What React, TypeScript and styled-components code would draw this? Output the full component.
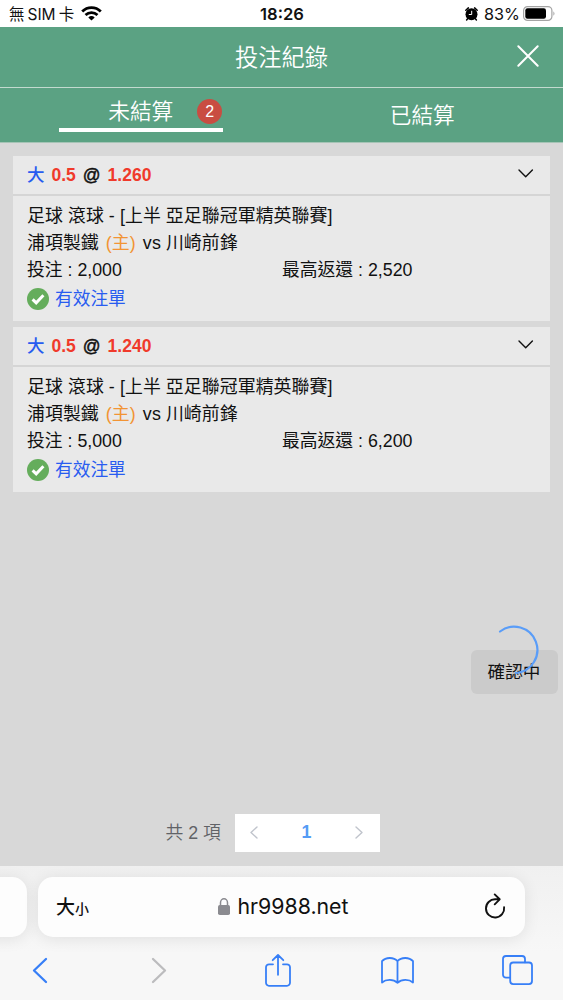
import React from 'react';
import styled, { createGlobalStyle } from 'styled-components';

const sans = '"Liberation Sans", "Noto Sans CJK TC", sans-serif';
const system = 'Inter, "Noto Sans CJK TC", sans-serif';

const GlobalStyle = createGlobalStyle`
  * { box-sizing: border-box; }
  body { margin: 0; background: #d8d8d8; font-family: ${sans}; color: #111; }
  svg { display: block; flex: none; overflow: visible; }
`;

const Screen = styled.div`
  width: 563px;
  height: 1000px;
  display: flex;
  flex-direction: column;
  background: #d8d8d8;
  overflow: hidden;
`;

const StatusBar = styled.div`
  flex: none;
  height: 27px;
  display: grid;
  grid-template-columns: 1fr auto 1fr;
  align-items: center;
  padding: 1px 8px 0 9px;
  background: #fff;
  font-family: ${system};
  font-size: 15.5px;
  line-height: 25px;
  white-space: nowrap;
`;

const Carrier = styled.div`
  display: flex;
  align-items: center;
  gap: 3px;
  svg { margin: -1px 0 0 4px; }
`;

const Clock = styled.div`
  font-weight: 600;
  font-size: 16.6px;
`;

const Power = styled.div`
  display: flex;
  align-items: center;
  justify-content: flex-end;
  gap: 6px;
  svg { margin-top: -1px; }
`;

const Percent = styled.span`
  font-size: 16.2px;
  margin-right: -3px;
`;

const TitleBar = styled.header`
  flex: none;
  height: 61px;
  display: grid;
  grid-template-columns: 70px 1fr 70px;
  align-items: center;
  justify-items: center;
  background: #5ba283;
  border-bottom: 1px solid #c3dacf;
  color: #fff;
  svg { margin: -2px 1px 0 0; }
`;

const Title = styled.h1`
  grid-column: 2;
  margin: 0;
  padding-top: 2px;
  font-size: 23.3px;
  font-weight: 350;
  line-height: 58px;
`;

const TabBar = styled.nav`
  flex: none;
  height: 55px;
  display: grid;
  grid-template-columns: 1fr 1fr;
  justify-items: center;
  background: #5ba283;
  border-bottom: 1px solid #a6c4b6;
`;

const Tab = styled.div<{ $active?: boolean }>`
  position: relative;
  width: 164px;
  height: ${p => (p.$active ? 44 : 54)}px;
  line-height: ${p => (p.$active ? 48 : 56)}px;
  border-bottom: ${p => (p.$active ? '4px solid #fff' : 'none')};
  text-align: center;
  color: #fff;
  font-size: 21.7px;
  font-weight: 350;
`;

const Badge = styled.span`
  position: absolute;
  right: 0.5px;
  top: 11px;
  width: 25px;
  height: 25px;
  border-radius: 50%;
  background: #c94d42;
  font-size: 16px;
  line-height: 25px;
`;

const Content = styled.main`
  flex: 1;
  min-height: 0;
  display: flex;
  flex-direction: column;
  padding: 13px 13.5px 14px 13px;
`;

const Card = styled.article`
  flex: none;
  height: 165px;
  margin-bottom: 6px;
  background: #e9e9e9;
  font-size: 17.9px;
  line-height: 27px;
  white-space: nowrap;
`;

const CardHead = styled.div`
  height: 40px;
  display: flex;
  align-items: center;
  justify-content: space-between;
  padding: 0 16px 1px 14px;
  border-bottom: 2px solid #d5d5d5;
  svg { margin-top: -2px; }
`;

const Odds = styled.div`
  display: flex;
  gap: 7px;
  padding-top: 1px;
  font-size: 17.5px;
  font-weight: 700;
  color: #f03a2b;
`;

const Side = styled.span`
  color: #285cf0;
  font-weight: 500;
`;

const At = styled.span`
  color: #111;
  font-weight: 400;
  -webkit-text-stroke: 0.5px #111;
`;

const CardBody = styled.div`
  padding: 7px 14px 0;
`;

const Line = styled.div`
  height: 27px;
  letter-spacing: 0.06px;
`;

const Host = styled.span`
  margin: 0 2px 0 2px;
  color: #f29434;
`;

const Amounts = styled.div`
  height: 27px;
  display: grid;
  grid-template-columns: 255px 1fr;
  font-size: 17.8px;
`;

const Valid = styled.div`
  height: 29px;
  display: flex;
  align-items: center;
  gap: 6px;
  color: #285cf0;
  font-size: 17.7px;
  span { padding-top: 2px; }
`;

const Pending = styled.div`
  position: relative;
  flex: none;
  align-self: flex-end;
  width: 87px;
  height: 43.5px;
  margin: 152px -8px 0 0;
  border-radius: 6px;
  background: #cbcbcb;
  text-align: center;
  font-size: 17.6px;
  line-height: 44px;
`;

const Spinner = styled.svg`
  position: absolute;
  left: 18.5px;
  top: -25px;
`;

const Pagination = styled.div`
  display: flex;
  align-items: center;
  gap: 14px;
  margin: auto 0 0 152.5px;
  color: #606266;
  font-size: 17.8px;
  font-weight: 350;
`;

const Total = styled.span`
  margin-top: -4px;
`;

const Pager = styled.div`
  width: 145px;
  height: 38px;
  display: flex;
  align-items: center;
  justify-content: space-between;
  padding: 0 17px 1px 15px;
  background: #fff;
  color: #559cf5;
  font-weight: 700;
`;

const Browser = styled.footer`
  flex: none;
  height: 134px;
  display: flex;
  flex-direction: column;
  background: linear-gradient(#f0f0f0, #f7f7f7 65%);
  font-family: ${system};
`;

const AddressRow = styled.div`
  display: flex;
  gap: 11px;
  margin: 10.5px 0 0 -20px;
`;

const Surface = styled.div`
  height: 60px;
  border-radius: 15px;
  background: #fdfdfd;
  box-shadow: 0 2px 16px rgba(0, 0, 0, 0.09);
`;

const PreviousTab = styled(Surface)`
  width: 47px;
`;

const Address = styled(Surface)`
  width: 487px;
  display: grid;
  grid-template-columns: 56px 1fr 56px;
  align-items: center;
  padding: 0 19px 0 18px;
`;

const TextSize = styled.div`
  display: flex;
  align-items: baseline;
  margin-top: -2px;
  font-size: 19px;
  font-weight: 500;
  small { font-size: 14px; }
`;

const Domain = styled.div`
  display: flex;
  align-items: center;
  justify-content: center;
  gap: 8px;
  padding-left: 4px;
  font-size: 21.3px;
  span { margin-top: -2px; }
`;

const Reload = styled.div`
  justify-self: end;
  margin-top: -3px;
`;

const Toolbar = styled.div`
  display: grid;
  grid-template-columns: repeat(5, 119.4px);
  align-items: center;
  justify-items: center;
  height: 40px;
  margin: 13.5px 0 0 -20px;
`;

const stroke = { fill: 'none', strokeLinecap: 'round', strokeLinejoin: 'round' } as const;
const blue = '#377ff7';

const Wifi = () => (
  <svg width="21" height="15" viewBox="0 0 21 15" fill="none" stroke="#000" strokeWidth="2.8">
    <path d="M1.2 5.5C6.5.3 14.5.3 19.8 5.5M4.5 9C8 5.7 13 5.7 16.5 9" />
    <path d="M10.5 14.6L7.3 11.5Q10.5 8.7 13.7 11.5Z" fill="#000" stroke="none" />
  </svg>
);

const Alarm = () => (
  <svg width="13" height="14" viewBox="0 0 13 14">
    <circle cx="6.5" cy="7.2" r="6" />
    <path d="M.8 3.2L3.4.9M12.2 3.2L9.6.9M2.6 11.7l-1 1.2M10.4 11.7l1 1.2" {...stroke} stroke="#000" strokeWidth="1.5" />
    <path d="M6.7 4.2v3.3H4.2" {...stroke} stroke="#fff" strokeWidth="1" />
  </svg>
);

const Battery = () => (
  <svg width="32" height="15" viewBox="0 0 32 15">
    <rect x=".6" y=".6" width="28.3" height="13.8" rx="4" fill="#fff" stroke="#a4a4a4" strokeWidth="1.2" />
    <rect x="2.3" y="2.2" width="20.7" height="10.6" rx="2.2" />
    <path d="M30.4 5.2q2.2 2.3 0 4.6z" fill="#a4a4a4" />
  </svg>
);

const Close = () => (
  <svg width="22" height="22" viewBox="0 0 22 22" {...stroke} stroke="#fff" strokeWidth="2">
    <path d="M1.3 1.3l19.4 19.4M20.7 1.3L1.3 20.7" />
  </svg>
);

const ChevronDown = () => (
  <svg width="16" height="9" viewBox="0 0 16 9" {...stroke} stroke="#111" strokeWidth="1.4">
    <path d="M1 1L7.7 7.7 14.4 1" />
  </svg>
);

const Check = () => (
  <svg width="22" height="22" viewBox="0 0 22 22">
    <circle cx="11" cy="11" r="11" fill="#65ad5c" />
    <path d="M5.6 11.3l3.6 3.5 7.2-7.5" fill="none" stroke="#fff" strokeWidth="3" />
  </svg>
);

const Arrow = ({ flip = false, w = 14, h = 25, color, thick }: { flip?: boolean; w?: number; h?: number; color: string; thick: number }) => (
  <svg width={w} height={h} viewBox={`0 0 ${w} ${h}`} {...stroke} stroke={color} strokeWidth={thick}>
    <path d={flip ? `M1 1L${w - 1} ${h / 2} 1 ${h - 1}` : `M${w - 1} 1L1 ${h / 2} ${w - 1} ${h - 1}`} />
  </svg>
);

const Lock = () => (
  <svg width="12" height="17" viewBox="0 0 12 17">
    <rect y="7" width="12" height="10" rx="1.8" fill="#8b8b90" />
    <path d="M2.5 8V4.7a3.5 3.9 0 0 1 7 0V8" fill="none" stroke="#8b8b90" strokeWidth="1.5" />
  </svg>
);

const ReloadIcon = () => (
  <svg width="22" height="25" viewBox="0 0 22 25" {...stroke} stroke="#111" strokeWidth="1.9">
    <path d="M15.6 6.3H11.3A9.1 9.1 0 1 0 20.1 14.3M10.7 1.4l5 4.9-5 5" />
  </svg>
);

const Share = () => (
  <svg width="26" height="33" viewBox="0 0 26 33" {...stroke} stroke={blue} strokeWidth="1.8">
    <path d="M8 10.3H4a3 3 0 0 0-3 3v15.5a3 3 0 0 0 3 3h18a3 3 0 0 0 3-3V13.3a3 3 0 0 0-3-3h-4M13 20.8V1.2M7.7 6.2L13 1l5.3 5.2" />
  </svg>
);

const Book = () => (
  <svg width="33" height="27" viewBox="0 0 33 27" {...stroke} stroke={blue} strokeWidth="1.8">
    <path d="M16.5 4.2C12.8-.1 4.7 0 1 4.2V25.5C5 22 12.4 22 16.5 25.8 20.6 22 28 22 32 25.5V4.2C28.3 0 20.2-.1 16.5 4.2zV25.8" />
  </svg>
);

const Tabs = () => (
  <svg width="31" height="30" viewBox="0 0 31 30" {...stroke} stroke={blue} strokeWidth="1.8">
    <path d="M7.8 22.7H4a3 3 0 0 1-3-3V4a3 3 0 0 1 3-3h16a3 3 0 0 1 3 3v3.3" />
    <rect x="8.2" y="7.5" width="21.8" height="21.6" rx="3" />
  </svg>
);

interface Bet {
  odds: string;
  stake: string;
  payout: string;
}

const bets: Bet[] = [
  { odds: '1.260', stake: '2,000', payout: '2,520' },
  { odds: '1.240', stake: '5,000', payout: '6,200' },
];

const BetCard = ({ odds, stake, payout }: Bet) => (
  <Card>
    <CardHead>
      <Odds>
        <Side>大</Side>
        <span>0.5</span>
        <At>@</At>
        <span>{odds}</span>
      </Odds>
      <ChevronDown />
    </CardHead>
    <CardBody>
      <Line>足球 滾球 - [上半 亞足聯冠軍精英聯賽]</Line>
      <Line>浦項製鐵 <Host>(主)</Host> vs 川崎前鋒</Line>
      <Amounts>
        <span>投注 : {stake}</span>
        <span>最高返還 : {payout}</span>
      </Amounts>
      <Valid>
        <Check />
        <span>有效注單</span>
      </Valid>
    </CardBody>
  </Card>
);

export default function App() {
  return (
    <Screen>
      <GlobalStyle />
      <StatusBar>
        <Carrier>
          <span>無</span>
          <span>SIM</span>
          <span>卡</span>
          <Wifi />
        </Carrier>
        <Clock>18:26</Clock>
        <Power>
          <Alarm />
          <Percent>83%</Percent>
          <Battery />
        </Power>
      </StatusBar>
      <TitleBar>
        <Title>投注紀錄</Title>
        <Close />
      </TitleBar>
      <TabBar>
        <Tab $active>
          未結算
          <Badge>2</Badge>
        </Tab>
        <Tab>已結算</Tab>
      </TabBar>
      <Content>
        {bets.map(bet => (
          <BetCard key={bet.odds} {...bet} />
        ))}
        <Pending>
          確認中
          <Spinner width="50" height="50" viewBox="0 0 50 50" {...stroke} stroke="#5a9df8" strokeWidth="2.2">
            <path d="M11 6.5A23.2 23.2 0 1 1 27 48" />
          </Spinner>
        </Pending>
        <Pagination>
          <Total>共 2 項</Total>
          <Pager>
            <Arrow w={8} h={13} color="#c0c4cc" thick={1.4} />
            <span>1</span>
            <Arrow flip w={8} h={13} color="#c0c4cc" thick={1.4} />
          </Pager>
        </Pagination>
      </Content>
      <Browser>
        <AddressRow>
          <PreviousTab />
          <Address>
            <TextSize>
              大<small>小</small>
            </TextSize>
            <Domain>
              <Lock />
              <span>hr9988.net</span>
            </Domain>
            <Reload>
              <ReloadIcon />
            </Reload>
          </Address>
        </AddressRow>
        <Toolbar>
          <Arrow color={blue} thick={2.3} />
          <Arrow flip color="#bcbcbe" thick={2.3} />
          <Share />
          <Book />
          <Tabs />
        </Toolbar>
      </Browser>
    </Screen>
  );
}
